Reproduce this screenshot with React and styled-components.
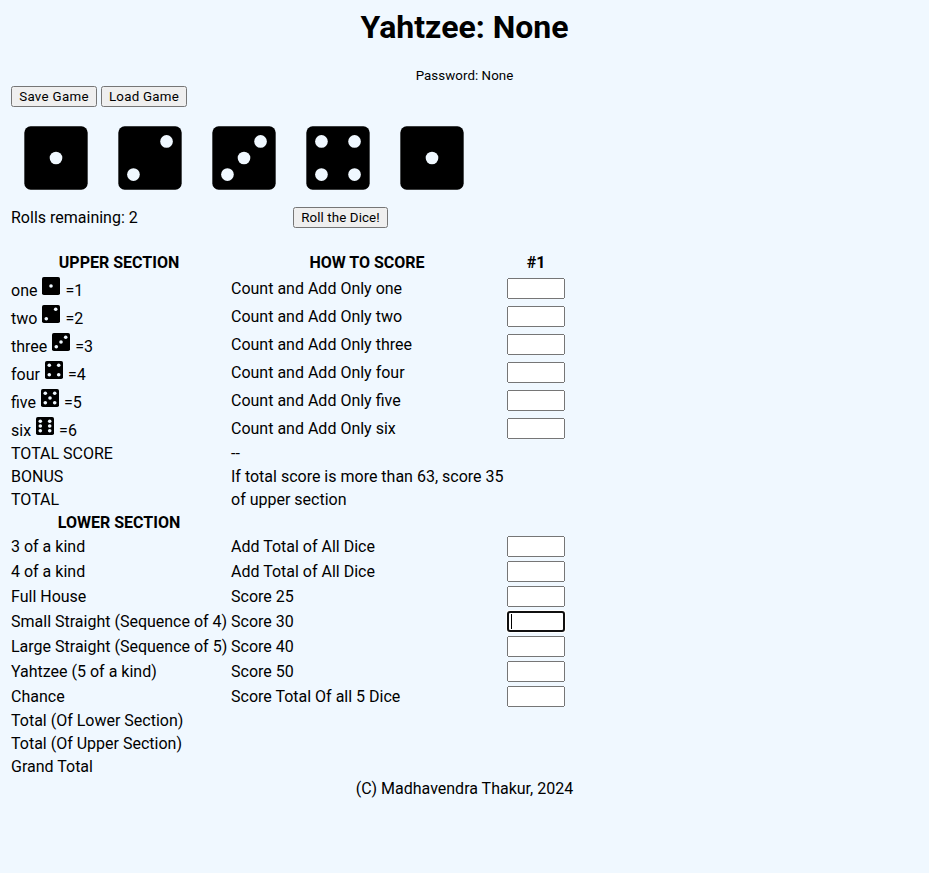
import React from 'react';
import styled, { createGlobalStyle } from 'styled-components';

const GlobalStyle = createGlobalStyle`
  body {
    margin: 8px;
    background: #f0f8ff;
    color: #000;
    font-family: Roboto, sans-serif;
    font-size: 16px;
    line-height: 19px;
  }
`;

const Title = styled.h1`
  margin: 0;
  font-size: 32px;
  line-height: 38px;
  font-weight: 700;
  text-align: center;
`;

const Password = styled.div`
  margin-top: 22px;
  font-size: 13.333px;
  line-height: 16px;
  letter-spacing: 0.05px;
  text-align: center;
`;

const Toolbar = styled.div`
  display: flex;
  gap: 4px;
  padding: 2px 3px 0;
`;

const Button = styled.button`
  box-sizing: border-box;
  width: ${(p) => p.$width}px;
  height: 21px;
  padding: 0;
  font-family: inherit;
  font-size: 13.333px;
  letter-spacing: ${(p) => p.$spacing || 0}px;
  white-space: nowrap;
`;

const DiceRow = styled.div`
  display: flex;
  gap: 30px;
  padding: 19px 16px 17px;
`;

const RollRow = styled.div`
  display: grid;
  grid-template-columns: 282px auto;
  justify-content: start;
  align-items: center;
  padding: 0 3px;
  height: 21px;
  margin-bottom: 22px;
`;

const ScoreTable = styled.table`
  table-layout: fixed;
  width: 560px;
  border-spacing: 2px;
`;

const Col = styled.col`
  width: ${(p) => p.$width}px;
`;

const HeadCell = styled.th`
  height: 19px;
  padding: 1px;
  font-weight: 700;
`;

const Cell = styled.td`
  height: ${(p) => p.$height || 19}px;
  padding: 1px;
  vertical-align: middle;
  white-space: nowrap;
`;

const FaceLabel = styled.div`
  display: flex;
  height: 24px;
  line-height: 30px;
`;

const MiniDie = styled.span`
  display: flex;
  padding: 1px 5px 0 5px;
`;

const InputWrap = styled.div`
  position: relative;
  display: flex;
`;

const ScoreInput = styled.input`
  box-sizing: border-box;
  width: 58px;
  height: 21px;
  font-family: inherit;
  font-size: 13.333px;
  caret-color: transparent;
`;

const Caret = styled.span`
  position: absolute;
  left: 4px;
  top: 3px;
  width: 1px;
  height: 15px;
  background: #000;
`;

const Footer = styled.footer`
  text-align: center;
`;

const PIPS = {
  1: [[0, 0]],
  2: [[1, -1], [-1, 1]],
  3: [[1, -1], [0, 0], [-1, 1]],
  4: [[-1, -1], [1, -1], [-1, 1], [1, 1]],
  5: [[-1, -1], [1, -1], [0, 0], [-1, 1], [1, 1]],
  6: [[-1, -1], [1, -1], [-1, 0], [1, 0], [-1, 1], [1, 1]],
};

function Die({ value, size, inset = 0 }) {
  return (
    <svg width={size} height={size} viewBox={`${-9 - inset} ${-9 - inset} ${18 + 2 * inset} ${18 + 2 * inset}`}>
      <rect x="-9" y="-9" width="18" height="18" rx="1.8" fill="#000" />
      {PIPS[value].map(([x, y]) => (
        <circle key={`${x},${y}`} cx={x * 4.7} cy={y * 4.7} r="1.8" fill="#f0f8ff" />
      ))}
    </svg>
  );
}

const DICE = [1, 2, 3, 4, 1];
const UPPER = ['one', 'two', 'three', 'four', 'five', 'six'];
const UPPER_TOTALS = [
  ['TOTAL SCORE', '--'],
  ['BONUS', 'If total score is more than 63, score 35'],
  ['TOTAL', 'of upper section'],
];
const LOWER = [
  ['3 of a kind', 'Add Total of All Dice'],
  ['4 of a kind', 'Add Total of All Dice'],
  ['Full House', 'Score 25'],
  ['Small Straight (Sequence of 4)', 'Score 30'],
  ['Large Straight (Sequence of 5)', 'Score 40'],
  ['Yahtzee (5 of a kind)', 'Score 50'],
  ['Chance', 'Score Total Of all 5 Dice'],
];
const LOWER_TOTALS = ['Total (Of Lower Section)', 'Total (Of Upper Section)', 'Grand Total'];

function ScoreField({ active }) {
  return (
    <InputWrap>
      <ScoreInput type="text" autoFocus={active} />
      {active && <Caret />}
    </InputWrap>
  );
}

export default function App() {
  return (
    <>
      <GlobalStyle />
      <Title>Yahtzee: None</Title>
      <Password>Password: None</Password>
      <Toolbar>
        <Button $width={86} $spacing={0.3}>Save Game</Button>
        <Button $width={86} $spacing={0.25}>Load Game</Button>
      </Toolbar>
      <DiceRow>
        {DICE.map((value, i) => (
          <Die key={i} value={value} size={64} inset={0.09} />
        ))}
      </DiceRow>
      <RollRow>
        <span>Rolls remaining: 2</span>
        <Button $width={95} $spacing={0.1}>Roll the Dice!</Button>
      </RollRow>
      <ScoreTable>
        <colgroup>
          <Col $width={218} />
          <Col $width={274} />
          <Col $width={60} />
        </colgroup>
        <tbody>
          <tr>
            <HeadCell>UPPER SECTION</HeadCell>
            <HeadCell>HOW TO SCORE</HeadCell>
            <HeadCell>#1</HeadCell>
          </tr>
          {UPPER.map((name, i) => (
            <tr key={name}>
              <Cell $height={24}>
                <FaceLabel>
                  {name}
                  <MiniDie><Die value={i + 1} size={18} /></MiniDie>
                  ={i + 1}
                </FaceLabel>
              </Cell>
              <Cell $height={24}>Count and Add Only {name}</Cell>
              <Cell $height={24}><ScoreField /></Cell>
            </tr>
          ))}
          {UPPER_TOTALS.map(([name, rule]) => (
            <tr key={name}>
              <Cell>{name}</Cell>
              <Cell>{rule}</Cell>
              <Cell />
            </tr>
          ))}
          <tr>
            <HeadCell>LOWER SECTION</HeadCell>
          </tr>
          {LOWER.map(([name, rule], i) => (
            <tr key={name}>
              <Cell $height={21}>{name}</Cell>
              <Cell $height={21}>{rule}</Cell>
              <Cell $height={21}><ScoreField active={i === 3} /></Cell>
            </tr>
          ))}
          {LOWER_TOTALS.map((name) => (
            <tr key={name}>
              <Cell>{name}</Cell>
            </tr>
          ))}
        </tbody>
      </ScoreTable>
      <Footer>(C) Madhavendra Thakur, 2024</Footer>
    </>
  );
}
